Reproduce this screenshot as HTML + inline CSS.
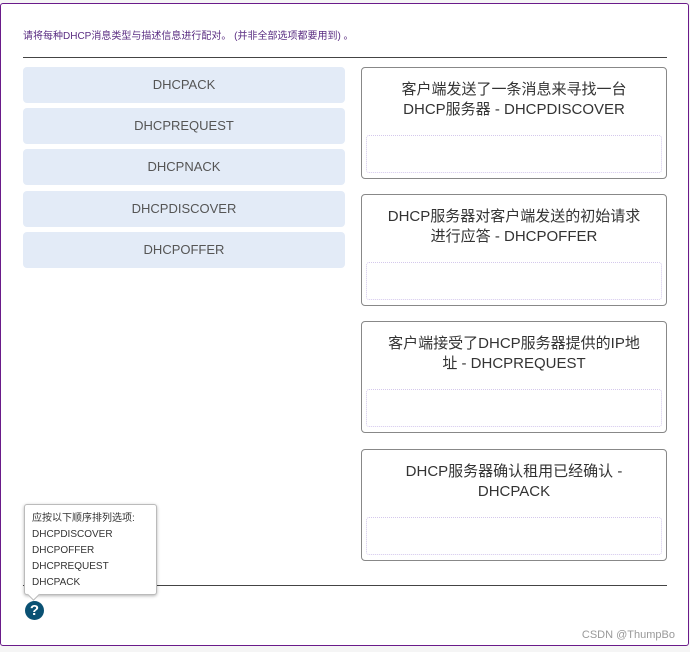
<!DOCTYPE html>
<html><head><meta charset="utf-8"><style>
body{margin:0;width:690px;height:652px;background:#f5f5f5;position:relative;font-family:"Liberation Sans","Noto Sans CJK SC",sans-serif;overflow:hidden}
.frame{position:absolute;left:0;top:3px;width:687px;height:641px;border:1px solid #6a1b8a;border-radius:3px;background:#fff}
.ins{position:absolute;left:23px;top:27px;font-size:10px;color:#5a2d82}
.hr1{position:absolute;left:23px;top:57px;width:644px;height:1px;background:#444}
.hr2{position:absolute;left:23px;top:585px;width:644px;height:1px;background:#444}
.it{position:absolute;left:23px;width:322px;height:36px;background:#e3ebf7;border-radius:4px;color:#555;font-size:13px;text-align:center;line-height:36px}
.bx{position:absolute;left:361px;width:304px;height:110px;border:1px solid #888;border-radius:4px;background:#fff}
.bx .t{position:absolute;top:12px;left:2px;right:2px;text-align:center;font-size:15px;color:#333;line-height:20px;white-space:nowrap}
.bx .d{position:absolute;left:4px;right:4px;top:67px;height:36px;border:1px dotted #d4c8ec;border-radius:3px}
.tip{position:absolute;left:24px;top:504px;width:133px;height:91px;border:1px solid #bbb;border-radius:3px;background:#fff;box-shadow:0 1px 3px rgba(0,0,0,.3);font-size:10px;color:#333;line-height:16px;padding:6px 0 0 7px;box-sizing:border-box}
.arr{position:absolute;left:29px;top:594px;width:8px;height:8px;background:#fff;border-right:1px solid #bbb;border-bottom:1px solid #bbb;transform:rotate(45deg);transform-origin:center;margin-top:-4px}
.help{position:absolute;left:25px;top:601px;width:19px;height:19px;border-radius:50%;background:#0a5173;color:#fff;font-weight:bold;font-size:15px;text-align:center;line-height:19px}
.wm{position:absolute;right:15px;top:629px;font-size:11px;color:#999}
</style></head><body>
<div class="frame"></div>
<div class="ins">请将每种DHCP消息类型与描述信息进行配对。 (并非全部选项都要用到) 。</div>
<div class="hr1"></div>
<div class="it" style="top:67px">DHCPACK</div>
<div class="it" style="top:108px">DHCPREQUEST</div>
<div class="it" style="top:149px">DHCPNACK</div>
<div class="it" style="top:191px">DHCPDISCOVER</div>
<div class="it" style="top:232px">DHCPOFFER</div>
<div class="bx" style="top:67px"><div class="t">客户端发送了一条消息来寻找一台<br>DHCP服务器 - DHCPDISCOVER</div><div class="d"></div></div>
<div class="bx" style="top:194px"><div class="t">DHCP服务器对客户端发送的初始请求<br>进行应答 - DHCPOFFER</div><div class="d"></div></div>
<div class="bx" style="top:321px"><div class="t">客户端接受了DHCP服务器提供的IP地<br>址 - DHCPREQUEST</div><div class="d"></div></div>
<div class="bx" style="top:449px"><div class="t">DHCP服务器确认租用已经确认 -<br>DHCPACK</div><div class="d"></div></div>
<div class="hr2"></div>
<div class="tip">应按以下顺序排列选项:<br>DHCPDISCOVER<br>DHCPOFFER<br>DHCPREQUEST<br>DHCPACK</div>
<div class="arr"></div>
<div class="help">?</div>
<div class="wm">CSDN @ThumpBo</div>
</body></html>
